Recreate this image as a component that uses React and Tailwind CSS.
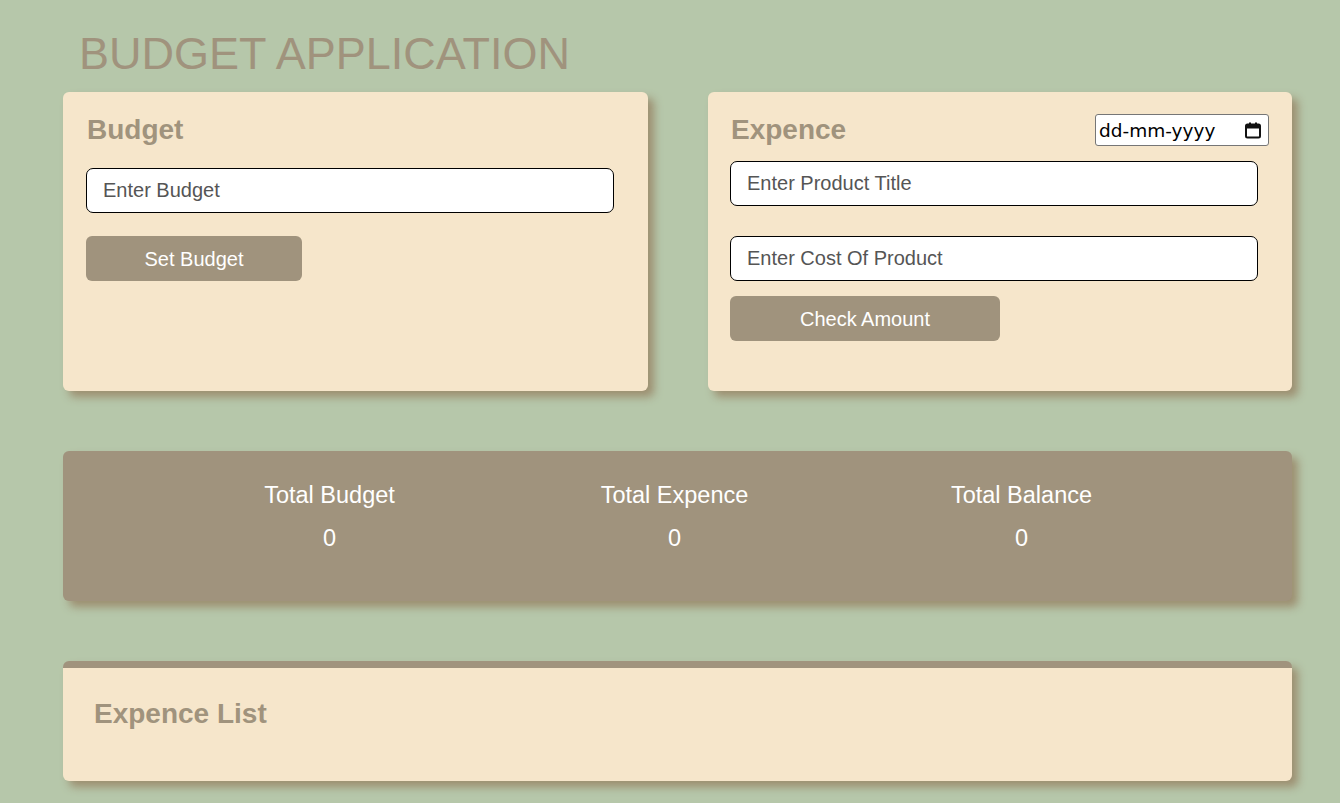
import { useState } from 'react'

const card = 'bg-[#f6e6cb] rounded-[6px] shadow-[6px_6px_8px_rgba(155,140,110,0.95)]'
const input = 'w-[528px] h-[45px] px-4 rounded-[7px] border border-black bg-white text-[20px] text-black placeholder:text-[#555] outline-none'
const btn = 'h-[45px] rounded-[6px] bg-[#a0937d] text-white text-[20px]'

function CalendarIcon() {
    return (
        <svg width="16" height="17" viewBox="0 0 16 17" className="absolute right-[8px] top-[8px] pointer-events-none">
            <rect x="1" y="2.5" width="14" height="13" rx="1.5" fill="none" stroke="#111" strokeWidth="2" />
            <rect x="1" y="2.5" width="14" height="4" fill="#111" />
            <rect x="4" y="0.5" width="2" height="3" fill="#111" />
            <rect x="10" y="0.5" width="2" height="3" fill="#111" />
        </svg>
    )
}

export default function App() {
    const [budget, setBudget] = useState('')
    const [title, setTitle] = useState('')
    const [cost, setCost] = useState('')
    const [date, setDate] = useState('')

    return (
        <div className="min-h-screen bg-[#b6c7aa] font-['Liberation_Sans',Arial,sans-serif] pt-[28px] pb-[20px]">
            <div className="ml-[63px] w-[1229px]">
                {/* Title */}
                <h1 className="pl-[16px] text-[45px] leading-[52px] text-[#a0937d] mb-[12px]">BUDGET APPLICATION</h1>

                {/* Budget + Expence */}
                <div className="flex gap-[60px]">
                    <div className={`${card} w-[585px] h-[299px] pt-[23px] pl-[23px]`}>
                        <h2 className="text-[28px] leading-[30px] font-bold text-[#a0937d] pl-[1px]">Budget</h2>
                        <input value={budget} onChange={e => setBudget(e.target.value)} placeholder="Enter Budget" className={`${input} mt-[23px] block`} />
                        <button className={`${btn} w-[216px] mt-[23px]`}>Set Budget</button>
                    </div>

                    <div className={`${card} w-[584px] h-[299px] pt-[22px] pl-[22px] pr-[23px]`}>
                        <div className="flex items-center justify-between">
                            <h2 className="text-[28px] leading-[30px] font-bold text-[#a0937d] pl-[1px]">Expence</h2>
                            <div className="relative">
                                <input value={date} onChange={e => setDate(e.target.value)} placeholder="dd-mm-yyyy"
                                    className="block w-[174px] h-[32px] pl-[3px] pr-[28px] bg-white border border-[#767676] rounded-[3px] text-[18.5px] font-['DejaVu_Sans',sans-serif] text-black placeholder:text-black outline-none" />
                                <CalendarIcon />
                            </div>
                        </div>
                        <input value={title} onChange={e => setTitle(e.target.value)} placeholder="Enter Product Title" className={`${input} mt-[15px] block`} />
                        <input value={cost} onChange={e => setCost(e.target.value)} placeholder="Enter Cost Of Product" className={`${input} mt-[30px] block`} />
                        <button className={`${btn} w-[270px] mt-[15px]`}>Check Amount</button>
                    </div>
                </div>

                {/* Totals */}
                <div className="mt-[60px] h-[150px] rounded-[6px] bg-[#a0937d] shadow-[6px_6px_8px_rgba(155,140,110,0.95)] pl-[94px] pr-[100px] pt-[29px] grid grid-cols-[345px_345px_345px] text-white text-center">
                    {['Total Budget', 'Total Expence', 'Total Balance'].map((l, i) => (
                        <div key={l} className={i === 2 ? 'pl-[4px]' : ''}>
                            <p className="text-[23.5px] leading-[30px]">{l}</p>
                            <p className="text-[23.5px] leading-[30px] mt-[13px]">0</p>
                        </div>
                    ))}
                </div>

                {/* Expence list */}
                <div className={`${card} mt-[60px] h-[120px] border-t-[7px] border-[#a0937d] pt-[30px] pl-[31px]`}>
                    <h2 className="text-[28px] leading-[32px] font-bold text-[#a0937d]">Expence List</h2>
                </div>
            </div>
        </div>
    )
}
